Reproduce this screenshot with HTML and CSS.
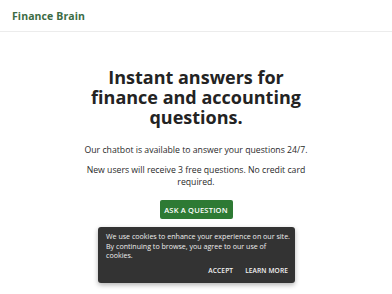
FILE: index.html
```html
<!DOCTYPE html>
<html>
<head>
<meta charset="utf-8">
<link rel="stylesheet" href="styles.css">
</head>
<body>
<header class="topbar">
  <div class="logo">Finance Brain</div>
</header>
<main class="hero">
  <h1 class="title">Instant answers for finance and accounting questions.</h1>
  <p class="text">Our chatbot is available to answer your questions 24/7.</p>
  <p class="text">New users will receive 3 free questions. No credit card required.</p>
  <button class="cta">ASK A QUESTION</button>
</main>
<div class="cookie">
  <p class="cookie-text">We use cookies to enhance your experience on our site. By continuing to browse, you agree to our use of cookies.</p>
  <div class="cookie-actions">
    <span class="cookie-btn">ACCEPT</span>
    <span class="cookie-btn">LEARN MORE</span>
  </div>
</div>
</body>
</html>
```
FILE: styles.css
```css
* { box-sizing: border-box; }
html, body { margin: 0; padding: 0; }
body {
  font-family: "Open Sans", "DejaVu Sans", sans-serif;
  background: #fff;
  color: #222;
  width: 392px;
  height: 294px;
  overflow: hidden;
  position: relative;
}
.topbar {
  height: 32px;
  border-bottom: 1px solid #ececec;
  display: flex;
  align-items: center;
  padding-left: 12px;
}
.logo {
  font-weight: 700;
  font-size: 10.5px;
  color: #3c6b44;
  letter-spacing: 0.1px;
}
.hero {
  display: flex;
  flex-direction: column;
  align-items: center;
  text-align: center;
  padding-top: 35px;
}
.title {
  margin: 0 0 17px;
  width: 230px;
  font-size: 18px;
  line-height: 20px;
  font-weight: 700;
  color: #232323;
}
.text {
  margin: 0 0 8px;
  width: 225px;
  font-size: 8.7px;
  line-height: 12px;
  color: #2a2a2a;
}
.text + .text { margin-bottom: 0; }
.cta {
  margin-top: 12px;
  background: #2e7a34;
  color: #fff;
  border: none;
  border-radius: 2px;
  font-family: inherit;
  font-size: 7.5px;
  font-weight: 600;
  height: 19px;
  width: 73px;
  padding: 0;
  letter-spacing: 0.2px;
}
.cookie {
  position: absolute;
  left: 98px;
  top: 227px;
  width: 197px;
  height: 56px;
  background: #333;
  border-radius: 3px;
  box-shadow: 0 2px 5px rgba(0,0,0,0.3);
  padding: 5px 4px 0 8px;
  color: #eee;
}
.cookie-text {
  margin: 0;
  font-size: 7.1px;
  line-height: 9.5px;
}
.cookie-actions {
  display: flex;
  justify-content: flex-end;
  gap: 12px;
  margin-top: 5px;
  padding-right: 3px;
}
.cookie-btn {
  font-size: 6.6px;
  font-weight: 600;
  color: #f4f4f4;
  letter-spacing: 0.1px;
}
```
